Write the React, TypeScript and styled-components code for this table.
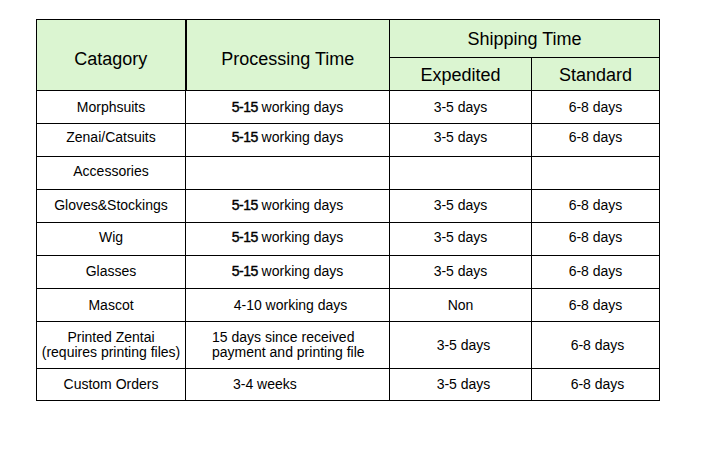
import styled, { createGlobalStyle } from "styled-components";

const GlobalStyle = createGlobalStyle`
  html, body {
    margin: 0;
    padding: 0;
    background: #fff;
  }
  body {
    font-family: "Liberation Sans", Arial, sans-serif;
    color: #000;
  }
`;

type Row = {
  category: React.ReactNode;
  processing?: React.ReactNode;
  expedited?: string;
  standard?: string;
  height: number;
  lift?: number;
  procAlign?: "left" | "center";
  procPad?: number;
  shipShift?: number;
};

const Fast = () => (
  <>
    <Bold>5-15</Bold> working days
  </>
);

const rows: Row[] = [
  { category: "Morphsuits", processing: <Fast />, expedited: "3-5 days", standard: "6-8 days", height: 33 },
  { category: "Zenai/Catsuits", processing: <Fast />, expedited: "3-5 days", standard: "6-8 days", height: 33, lift: 5 },
  { category: "Accessories", height: 33, lift: 3 },
  { category: "Gloves&Stockings", processing: <Fast />, expedited: "3-5 days", standard: "6-8 days", height: 33, lift: 1 },
  { category: "Wig", processing: <Fast />, expedited: "3-5 days", standard: "6-8 days", height: 33, lift: 3 },
  { category: "Glasses", processing: <Fast />, expedited: "3-5 days", standard: "6-8 days", height: 33, lift: 1 },
  { category: "Mascot", processing: "4-10 working days", expedited: "Non", standard: "6-8 days", height: 33, procPad: 6 },
  {
    category: (
      <>
        Printed Zentai
        <br />
        (requires printing files)
      </>
    ),
    processing: (
      <>
        15 days since received
        <br />
        payment and printing file
      </>
    ),
    expedited: "3-5 days",
    standard: "6-8 days",
    height: 47,
    procAlign: "left",
    procPad: 26,
    shipShift: 6,
  },
  {
    category: "Custom Orders",
    processing: "3-4 weeks",
    expedited: "3-5 days",
    standard: "6-8 days",
    height: 32,
    procAlign: "left",
    procPad: 47,
    shipShift: 6,
  },
];

export default function App() {
  return (
    <Page>
      <GlobalStyle />
      <Table>
        <colgroup>
          <col style={{ width: 149 }} />
          <col style={{ width: 204 }} />
          <col style={{ width: 142 }} />
          <col style={{ width: 128 }} />
        </colgroup>
        <thead>
          <HeadRow $h={38}>
            <HeadCell rowSpan={2} $thick $drop={8}>
              Catagory
            </HeadCell>
            <HeadCell rowSpan={2} $drop={8}>
              Processing Time
            </HeadCell>
            <HeadCell colSpan={2}>Shipping Time</HeadCell>
          </HeadRow>
          <HeadRow $h={33}>
            <HeadCell $drop={2}>Expedited</HeadCell>
            <HeadCell $drop={2}>Standard</HeadCell>
          </HeadRow>
        </thead>
        <tbody>
          {rows.map((r, i) => (
            <BodyRow key={i} $h={r.height}>
              <Cell $lift={r.lift}>{r.category}</Cell>
              <Cell $lift={r.lift} $align={r.procAlign} $pad={r.procPad}>
                {r.processing}
              </Cell>
              <Cell $lift={r.lift} $pad={r.shipShift}>
                {r.expedited}
              </Cell>
              <Cell $lift={r.lift} $pad={r.shipShift ? 4 : 0}>
                {r.standard}
              </Cell>
            </BodyRow>
          ))}
        </tbody>
      </Table>
    </Page>
  );
}

const Page = styled.div`
  width: 706px;
  height: 450px;
  box-sizing: border-box;
  padding: 19px 0 0 36px;
  background: #fff;
`;

const Table = styled.table`
  border-collapse: collapse;
  table-layout: fixed;
  width: 623px;
`;

const HeadRow = styled.tr<{ $h: number }>`
  height: ${(p) => p.$h}px;
`;

const BodyRow = styled.tr<{ $h: number }>`
  height: ${(p) => p.$h}px;
`;

const HeadCell = styled.th<{ $thick?: boolean; $drop?: number }>`
  background: #dbf5d1;
  border: 1px solid #000;
  border-right-width: ${(p) => (p.$thick ? 2 : 1)}px;
  font-weight: normal;
  font-size: 18px;
  line-height: 20px;
  text-align: center;
  vertical-align: middle;
  padding: ${(p) => p.$drop ?? 0}px 0 0 0;
`;

const Cell = styled.td<{ $align?: "left" | "center"; $pad?: number; $lift?: number }>`
  border: 1px solid #000;
  font-size: 14px;
  line-height: 15px;
  text-align: ${(p) => p.$align ?? "center"};
  vertical-align: middle;
  padding: 0 0 ${(p) => p.$lift ?? 0}px ${(p) => p.$pad ?? 0}px;
`;

const Bold = styled.span`
  -webkit-text-stroke: 0.4px #000;
  letter-spacing: -0.5px;
`;
